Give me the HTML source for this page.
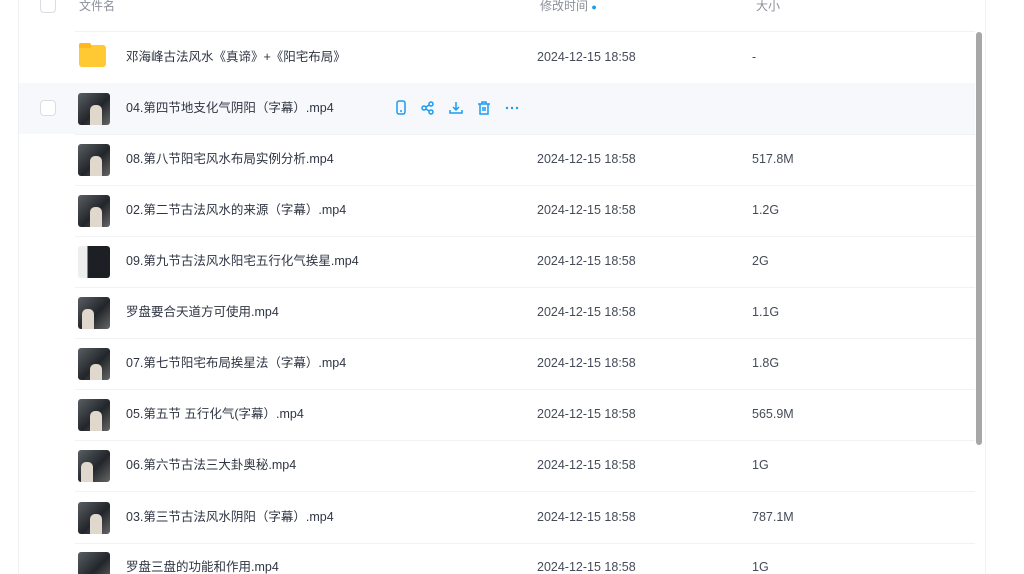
<!DOCTYPE html>
<html><head><meta charset="utf-8"><style>
*{margin:0;padding:0;box-sizing:border-box}
html,body{width:1024px;height:574px;overflow:hidden}
body{background:#fff;font-family:"Liberation Sans","Noto Sans CJK SC",sans-serif;color:#2f3542;font-size:12.5px;position:relative;line-height:16px}
.frame{position:absolute;left:18px;top:-2px;width:968px;height:590px;border-left:1px solid #eef0f4;border-right:1px solid #eef0f4}
.hd{position:absolute;top:-2px;height:16px;font-size:12px;color:#8a8f99}
.hline{position:absolute;left:75px;width:900px;height:1px;background:#f1f2f5}
.row{position:absolute;left:19px;width:956px;height:51px}
.row.h{background:#f7f8fc}
.cb{position:absolute;left:21px;width:16px;height:16px;border:1px solid #d9dce2;border-radius:4px;background:#fff}
.th{position:absolute;left:59px;top:10px;width:32px;height:32px;border-radius:3px;background:linear-gradient(135deg,#5a5f65,#22262a 55%,#666);overflow:hidden}
.th i{position:absolute;left:12px;top:12px;width:12px;height:20px;background:#e0d8cc;border-radius:5px 5px 0 0}
.nm,.dt,.sz{position:absolute;top:17px;line-height:16px;height:16px;white-space:nowrap;overflow:visible}
.nm{left:107px}
.dt{left:518px;color:#454b57}
.sz{left:733px;color:#454b57}
.sb{position:absolute;left:976px;top:32px;width:6px;height:413px;background:#a7a7a7;border-radius:3px}
.ic{position:absolute;top:17px}
</style></head><body>
<div class="frame"></div>
<div class="cb" style="left:40px;top:-3px;position:absolute"></div>
<div class="hd" style="left:79px">文件名</div>
<div class="hd" style="left:540px">修改时间 <span style="color:#1a9cf0;font-size:9px">&#9679;</span></div>
<div class="hd" style="left:756px">大小</div>
<div class="hline" style="top:31px"></div>

<div class="row" style="top:32px">
<div style="position:absolute;left:60px;top:13px;width:27px;height:22px;background:#ffc933;border-radius:3px"></div>
<div style="position:absolute;left:60px;top:11px;width:12px;height:5px;background:#ffb81f;border-radius:2px 2px 0 0"></div>
<div class="nm">邓海峰古法风水《真谛》+《阳宅布局》</div><div class="dt">2024-12-15 18:58</div><div class="sz">-</div></div>

<div class="row h" style="top:83px"><div class="cb" style="top:17px"></div><div class="th"><i></i></div>
<div class="nm">04.第四节地支化气阴阳（字幕）.mp4</div>
<svg class="ic" style="left:375px" width="130" height="16" fill="none" stroke="#1a9cf0" stroke-width="1.5">
<rect x="3" y="1" width="8" height="13" rx="2"/><line x1="6" y1="11" x2="8" y2="11"/>
<circle cx="30" cy="8" r="2"/><circle cx="37" cy="4" r="2"/><circle cx="37" cy="12" r="2"/><path d="M32 7l3-2M32 9l3 2"/>
<path d="M62 2v8M59 7l3 3 3-3M56 10v3h12v-3"/>
<path d="M84 4h12M88 4V2h4v2M86 4v10h8V4M89 7v4M91 7v4"/>
<circle cx="113" cy="8" r="1.2" fill="#1a9cf0" stroke="none"/><circle cx="118" cy="8" r="1.2" fill="#1a9cf0" stroke="none"/><circle cx="123" cy="8" r="1.2" fill="#1a9cf0" stroke="none"/>
</svg></div>

<div class="hline" style="top:134px"></div>
<div class="row" style="top:134px"><div class="th"><i></i></div><div class="nm">08.第八节阳宅风水布局实例分析.mp4</div><div class="dt">2024-12-15 18:58</div><div class="sz">517.8M</div></div>
<div class="hline" style="top:185px"></div>
<div class="row" style="top:185px"><div class="th"><i></i></div><div class="nm">02.第二节古法风水的来源（字幕）.mp4</div><div class="dt">2024-12-15 18:58</div><div class="sz">1.2G</div></div>
<div class="hline" style="top:236px"></div>
<div class="row" style="top:236px"><div class="th" style="background:linear-gradient(90deg,#eee 30%,#1c2024 30%)"></div><div class="nm">09.第九节古法风水阳宅五行化气挨星.mp4</div><div class="dt">2024-12-15 18:58</div><div class="sz">2G</div></div>
<div class="hline" style="top:287px"></div>
<div class="row" style="top:287px"><div class="th"><i style="left:4px"></i></div><div class="nm">罗盘要合天道方可使用.mp4</div><div class="dt">2024-12-15 18:58</div><div class="sz">1.1G</div></div>
<div class="hline" style="top:338px"></div>
<div class="row" style="top:338px"><div class="th"><i style="top:16px"></i></div><div class="nm">07.第七节阳宅布局挨星法（字幕）.mp4</div><div class="dt">2024-12-15 18:58</div><div class="sz">1.8G</div></div>
<div class="hline" style="top:389px"></div>
<div class="row" style="top:389px"><div class="th"><i></i></div><div class="nm">05.第五节 五行化气(字幕）.mp4</div><div class="dt">2024-12-15 18:58</div><div class="sz">565.9M</div></div>
<div class="hline" style="top:440px"></div>
<div class="row" style="top:440px"><div class="th"><i style="left:3px"></i></div><div class="nm">06.第六节古法三大卦奥秘.mp4</div><div class="dt">2024-12-15 18:58</div><div class="sz">1G</div></div>
<div class="hline" style="top:491px"></div>
<div class="row" style="top:492px"><div class="th"><i></i></div><div class="nm">03.第三节古法风水阴阳（字幕）.mp4</div><div class="dt">2024-12-15 18:58</div><div class="sz">787.1M</div></div>
<div class="hline" style="top:543px"></div>
<div class="row" style="top:542px"><div class="th"></div><div class="nm">罗盘三盘的功能和作用.mp4</div><div class="dt">2024-12-15 18:58</div><div class="sz">1G</div></div>
<div class="sb"></div>
</body></html>
